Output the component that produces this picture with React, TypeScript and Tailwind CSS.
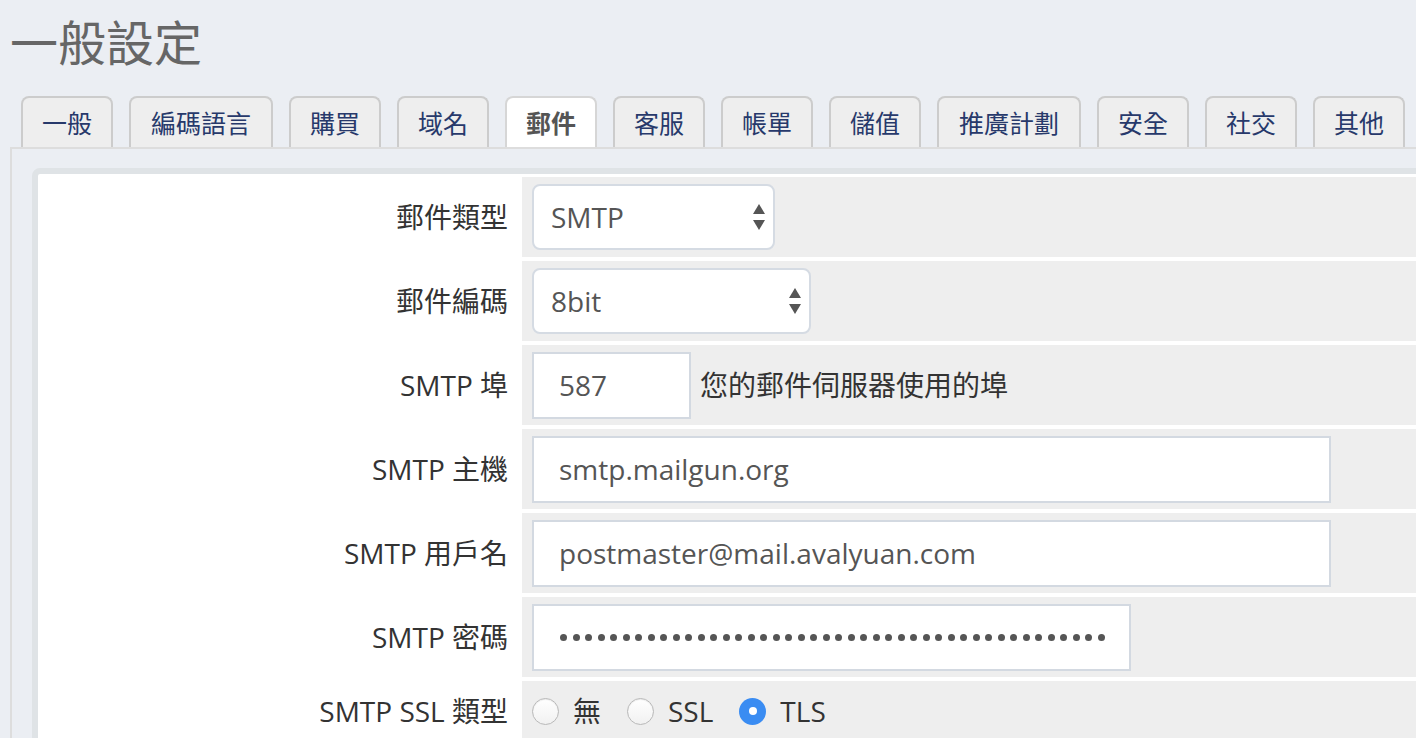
import React from "react";

const tabs = ["一般", "編碼語言", "購買", "域名", "郵件", "客服", "帳單", "儲值", "推廣計劃", "安全", "社交", "其他"];

function Arrows() {
  return (
    <svg width="12" height="26" viewBox="0 0 12 26" className="shrink-0">
      <polygon points="6,0 12,10 0,10" fill="#555" />
      <polygon points="0,16 12,16 6,26" fill="#555" />
    </svg>
  );
}

function SelectBox({ value, width }: { value: string; width: string }) {
  return (
    <div className={`${width} flex h-[66px] items-center justify-between rounded-[8px] border-2 border-[#d5dbe3] bg-white pl-[17px] pr-[8px] text-[28px] text-[#555]`}>
      <span>{value}</span>
      <Arrows />
    </div>
  );
}

function TextBox({ value, width }: { value: string; width: string }) {
  return (
    <input
      readOnly
      type="text"
      value={value}
      className={`${width} h-[67px] border-2 border-[#d3d9e1] bg-white pl-[25px] pr-[24px] text-[28px] text-[#555] outline-none`}
    />
  );
}

// masked password, drawn as dots so their size matches
function PasswordBox({ length }: { length: number }) {
  return (
    <div className="flex h-[67px] w-[599px] items-center border-2 border-[#d3d9e1] bg-white pl-[26px] pr-[24px]">
      <div className="flex gap-[5.5px] overflow-hidden">
        {Array.from({ length }).map((_, i) => (
          <span key={i} className="h-[7px] w-[7px] shrink-0 rounded-full bg-[#555]" />
        ))}
      </div>
    </div>
  );
}

function Radio({ checked, label }: { checked?: boolean; label: string }) {
  return (
    <div className="flex items-center">
      {checked ? (
        <span className="flex h-[27px] w-[27px] items-center justify-center rounded-full bg-[#3a8cf2]">
          <span className="h-[8px] w-[8px] rounded-full bg-white" />
        </span>
      ) : (
        <span className="h-[27px] w-[27px] rounded-full border border-[#b9b9b9] bg-gradient-to-b from-white to-[#f1f1f1] shadow-[inset_0_1px_1px_rgba(0,0,0,0.08)]" />
      )}
      <span className="ml-[14px] text-[28px] text-[#333]">{label}</span>
    </div>
  );
}

function Row({ label, h = "h-[80px]", children }: { label: string; h?: string; children: React.ReactNode }) {
  return (
    <div className={`grid ${h} grid-cols-[484px_1fr]`}>
      <div className="flex items-center justify-end bg-white pr-[14px] text-[28px] text-[#333]">{label}</div>
      <div className="flex items-center bg-[#eeeeee] pl-[10px]">{children}</div>
    </div>
  );
}

export default function App() {
  return (
    <div className="h-[738px] overflow-hidden bg-[#ebeef3] font-['Open_Sans','Noto_Sans_CJK_TC',sans-serif]">
      <h1 className="pl-[10px] pt-[19px] text-[48px] leading-[48px] text-[#666]">一般設定</h1>

      <div className="mt-[29px] flex gap-[16px] pl-[21px]">
        {tabs.map((t) => {
          const w = t.length > 2 ? "w-[144px]" : "w-[92px]";
          return t === "郵件" ? (
            <div key={t} className={`${w} flex h-[51px] items-center justify-center rounded-t-[8px] border-2 border-b-0 border-[#d6d6d6] bg-white pt-[3px] text-[25px] font-bold text-[#555]`}>
              {t}
            </div>
          ) : (
            <div key={t} className={`${w} flex h-[51px] items-center justify-center rounded-t-[8px] border-2 border-b-0 border-[#cccccc] bg-[#eeeeee] pt-[3px] text-[25px] text-[#27396b]`}>
              {t}
            </div>
          );
        })}
      </div>

      <div className="ml-[10px] border-l-2 border-t-2 border-[#dddddd] pl-[20px] pt-[19px]">
        <div className="w-[1420px] rounded-[8px] border-[6px] border-[#dfe3e6] bg-white pt-[3px]">
          <div className="flex flex-col gap-[4px]">
            <Row label="郵件類型">
              <SelectBox value="SMTP" width="w-[243px]" />
            </Row>
            <Row label="郵件編碼">
              <SelectBox value="8bit" width="w-[279px]" />
            </Row>
            <Row label="SMTP 埠">
              <TextBox value="587" width="w-[159px]" />
              <span className="ml-[9px] text-[28px] text-[#333]">您的郵件伺服器使用的埠</span>
            </Row>
            <Row label="SMTP 主機">
              <TextBox value="smtp.mailgun.org" width="w-[799px]" />
            </Row>
            <Row label="SMTP 用戶名">
              <TextBox value="postmaster@mail.avalyuan.com" width="w-[799px]" />
            </Row>
            <Row label="SMTP 密碼">
              <PasswordBox length={50} />
            </Row>
            <Row label="SMTP SSL 類型" h="h-[60px]">
              <div className="flex items-center gap-[26px]">
                <Radio label="無" />
                <Radio label="SSL" />
                <Radio checked label="TLS" />
              </div>
            </Row>
          </div>
        </div>
      </div>
    </div>
  );
}
